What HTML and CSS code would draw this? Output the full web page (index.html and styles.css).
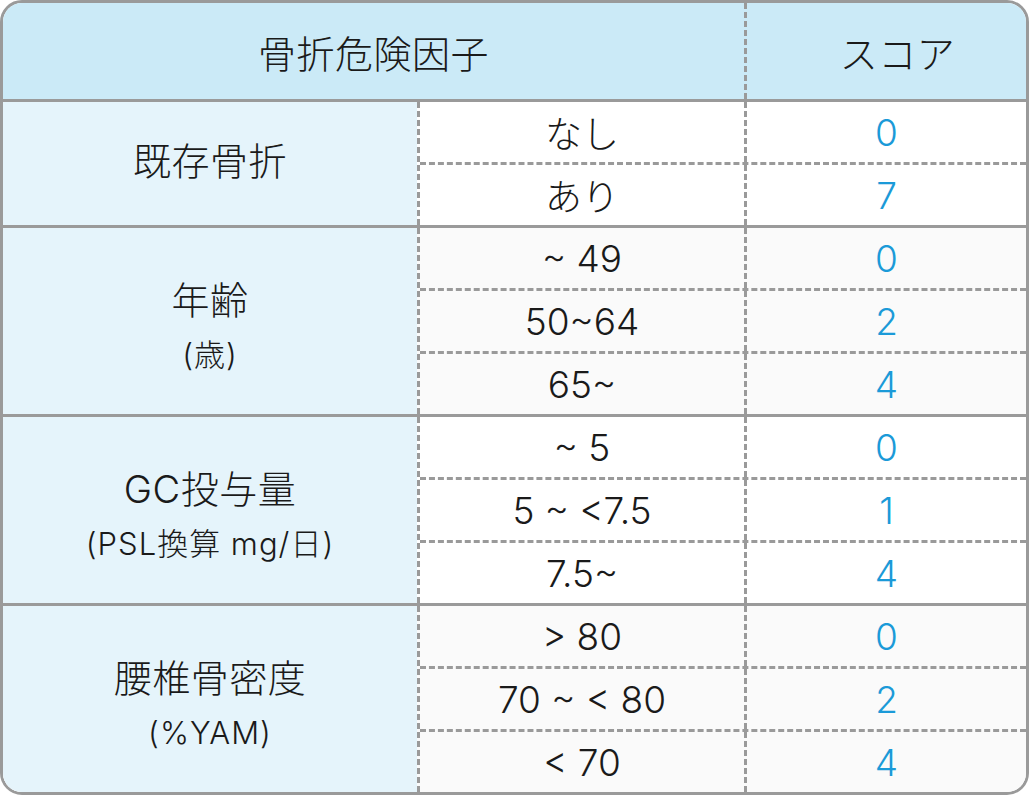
FILE: index.html
```html
<!DOCTYPE html>
<html lang="ja">
<head>
<meta charset="utf-8">
<title>骨折危険因子</title>
<link rel="stylesheet" href="styles.css">
</head>
<body>
<div class="table">
  <div class="head">
    <div class="h-main">骨折危険因子</div>
    <div class="h-score">スコア</div>
  </div>

  <div class="group g2">
    <div class="label one"><div class="main">既存骨折</div></div>
    <div class="rows">
      <div class="row"><div class="val">なし</div><div class="score">0</div></div>
      <div class="row"><div class="val">あり</div><div class="score">7</div></div>
    </div>
  </div>

  <div class="group g3 alt">
    <div class="label two"><div class="main">年齢</div><div class="sub">(歳)</div></div>
    <div class="rows">
      <div class="row"><div class="val">~ 49</div><div class="score">0</div></div>
      <div class="row"><div class="val">50~64</div><div class="score">2</div></div>
      <div class="row"><div class="val">65~</div><div class="score">4</div></div>
    </div>
  </div>

  <div class="group g3">
    <div class="label two"><div class="main">GC投与量</div><div class="sub">(PSL換算 mg/日)</div></div>
    <div class="rows">
      <div class="row"><div class="val">~ 5</div><div class="score">0</div></div>
      <div class="row"><div class="val">5 ~ &lt;7.5</div><div class="score">1</div></div>
      <div class="row"><div class="val">7.5~</div><div class="score">4</div></div>
    </div>
  </div>

  <div class="group g3 alt last">
    <div class="label two"><div class="main">腰椎骨密度</div><div class="sub">(%YAM)</div></div>
    <div class="rows">
      <div class="row"><div class="val">&gt; 80</div><div class="score">0</div></div>
      <div class="row"><div class="val">70 ~ &lt; 80</div><div class="score">2</div></div>
      <div class="row"><div class="val">&lt; 70</div><div class="score">4</div></div>
    </div>
  </div>
</div>
</body>
</html>
```

FILE: styles.css
```css
html, body {
  margin: 0;
  padding: 0;
  background: #ffffff;
}
body {
  font-family: "Inter", "Noto Sans CJK JP", "Noto Sans", sans-serif;
  font-weight: 300;
  color: #1a1a1a;
}
.table {
  box-sizing: border-box;
  width: 1029px;
  height: 795px;
  border: 3px solid #9a9a9a;
  border-radius: 22px;
  overflow: hidden;
  display: flex;
  flex-direction: column;
}
.head {
  display: flex;
  height: 96px;
  background: #cbeaf7;
  border-bottom: 3px solid #9a9a9a;
  font-size: 38px;
  letter-spacing: 0.5px;
}
.h-main {
  width: 741px;
  display: flex;
  align-items: center;
  justify-content: center;
}
.h-score {
  flex: 1;
  border-left: 3px dashed #9a9a9a;
  display: flex;
  align-items: center;
  justify-content: center;
  padding-left: 22px;
}
.group {
  display: flex;
  border-bottom: 3px solid #9a9a9a;
  background: #ffffff;
}
.group.last {
  border-bottom: none;
}
.group.alt {
  background: #fafafa;
}
.g2 { height: 123px; }
.g3 { height: 186px; }
.label {
  box-sizing: border-box;
  width: 414px;
  background: #e5f4fb;
  display: flex;
  flex-direction: column;
  align-items: center;
  justify-content: center;
}
.label.one {
  padding-bottom: 5px;
}
.label.two {
  padding-top: 8px;
}
.label .main {
  font-size: 38px;
  line-height: 54px;
  letter-spacing: 0.5px;
}
.label .sub {
  font-size: 31px;
  line-height: 44px;
  letter-spacing: 1px;
  margin-top: 6px;
}
.rows {
  flex: 1;
  display: flex;
  flex-direction: column;
  border-left: 3px dashed #9a9a9a;
}
.row {
  flex: 1;
  display: flex;
}
.row + .row {
  border-top: 3px dashed #9a9a9a;
}
.val {
  width: 324px;
  display: flex;
  align-items: center;
  justify-content: center;
  font-size: 37px;
}
.score {
  flex: 1;
  border-left: 3px dashed #9a9a9a;
  display: flex;
  align-items: center;
  justify-content: center;
  font-size: 37px;
  color: #1b9ad8;
}
```
